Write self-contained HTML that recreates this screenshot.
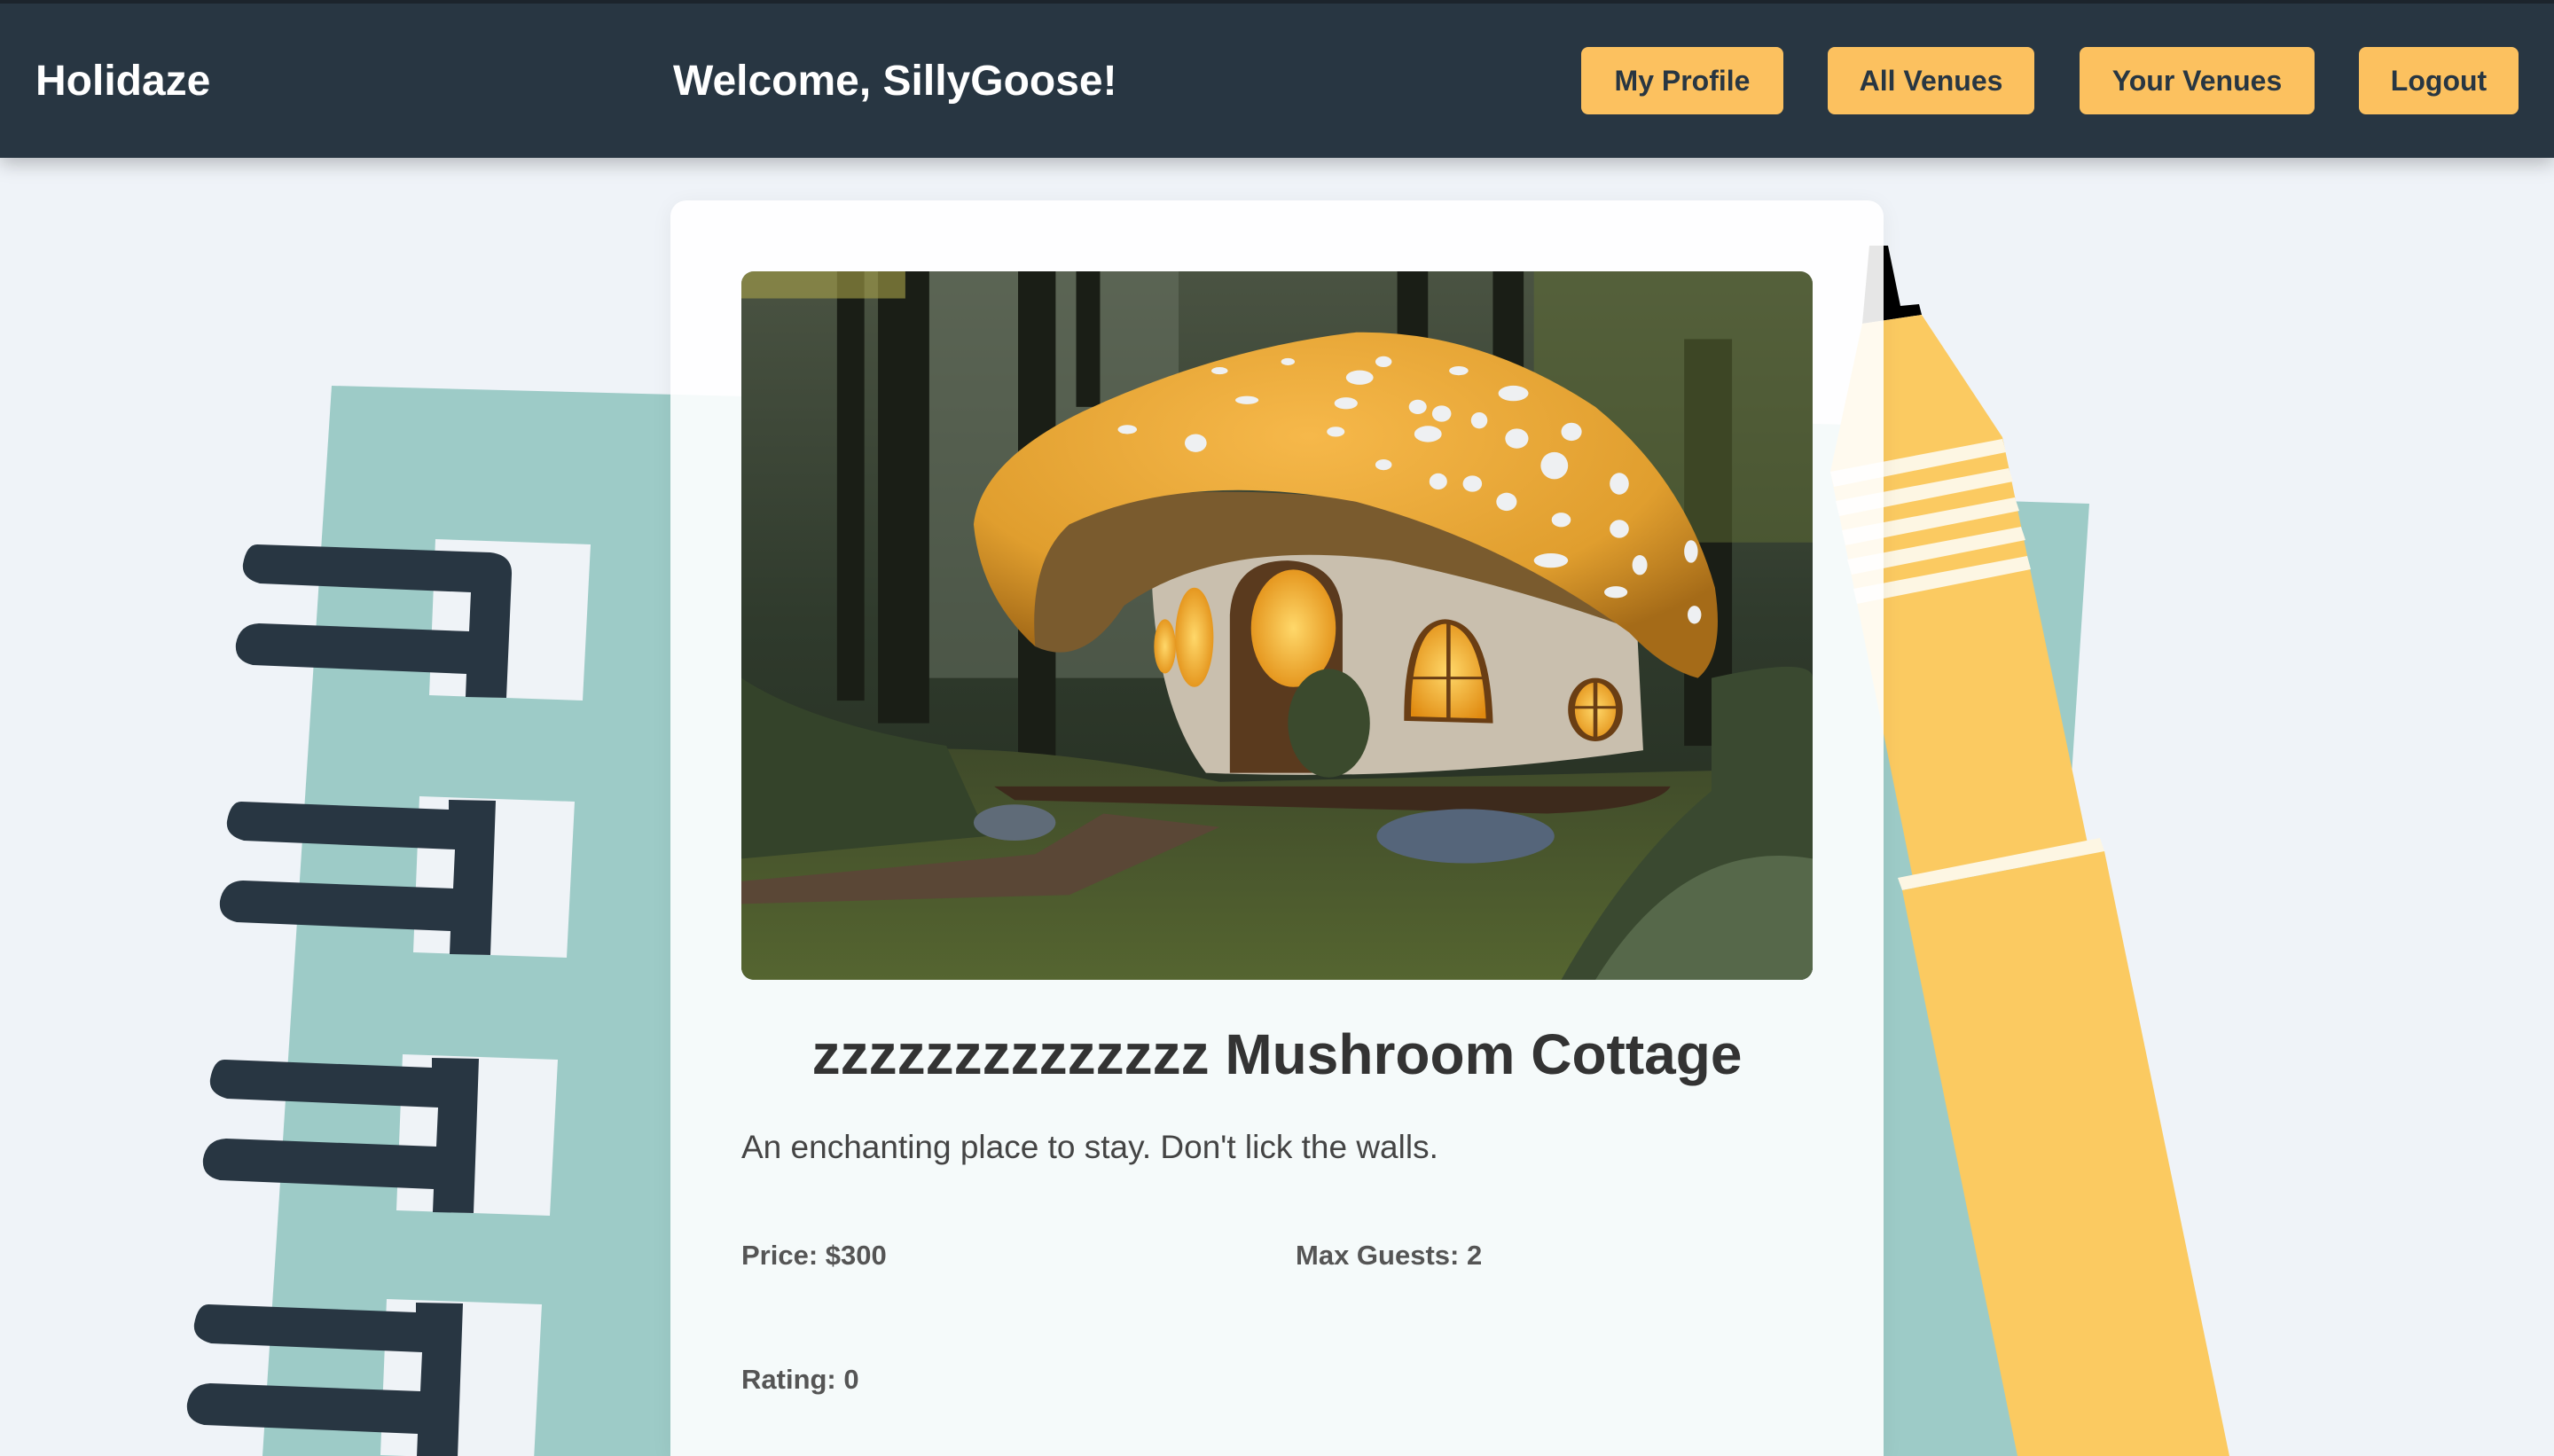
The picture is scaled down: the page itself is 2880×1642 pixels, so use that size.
<!DOCTYPE html>
<html><head><meta charset="utf-8">
<style>
*{margin:0;padding:0;box-sizing:border-box}
html,body{width:2880px;height:1642px;overflow:hidden;background:#eff3f8;font-family:"Liberation Sans",Arial,sans-serif}
#bg{position:absolute;left:0;top:0}
header{position:absolute;left:0;top:0;width:2880px;height:178px;background:#283642;border-top:4px solid #1c242c;box-shadow:0 6px 20px rgba(0,0,0,.25);z-index:5}
.logo{position:absolute;left:40px;top:60px;font-size:48px;font-weight:bold;color:#fff}
.welcome{position:absolute;left:759px;top:60px;font-size:48px;font-weight:bold;color:#fff}
.btn{position:absolute;top:49px;height:76px;background:#fcc15f;border-radius:8px;color:#283642;font-size:32px;font-weight:bold;display:flex;align-items:center;justify-content:center}
.card{position:absolute;left:756px;top:226px;width:1368px;height:1416px;background:rgba(255,255,255,.9);border-radius:18px 18px 0 0;box-shadow:0 4px 24px rgba(0,0,0,.06);z-index:3}
.img{position:absolute;left:80px;top:80px;width:1208px;height:799px;border-radius:14px;overflow:hidden}
h1{position:absolute;left:0;width:100%;text-align:center;top:926px;font-size:64px;font-weight:bold;color:#333}
.desc{position:absolute;left:80px;top:1047px;font-size:37px;color:#444}
.f{position:absolute;font-size:31px;font-weight:bold;color:#555}
</style></head><body>
<svg id="bg" width="2880" height="1642" viewBox="0 0 2880 1642">
  <polygon points="374,435 2124,480 2124,1642 296,1642" fill="#9dcbc7"/>
  <g fill="#eff3f7">
    <polygon points="491,608 666,614 657,790 484,784"/>
    <polygon points="473,898 648,904 639,1080 466,1074"/>
    <polygon points="454,1189 629,1195 620,1371 447,1365"/>
    <polygon points="436,1465 611,1471 602,1647 429,1641"/>
  </g>
  <g fill="#283642">
    <path d="M290,614 L553,623 Q578,626 577,648 L571,787 L525,786 L526,760 L285,750 Q264,745 266,726 Q270,704 292,703 L529,712 L531,668 L293,658 Q272,652 274,636 Q278,614 290,614 Z"/>
    <g transform="translate(-18,290)"><path d="M290,614 L524,623 L524,612 L577,613 L571,787 L525,786 L526,760 L285,750 Q264,745 266,726 Q270,704 292,703 L529,712 L531,668 L293,658 Q272,652 274,636 Q278,614 290,614 Z"/></g>
    <g transform="translate(-37,581)"><path d="M290,614 L524,623 L524,612 L577,613 L571,787 L525,786 L526,760 L285,750 Q264,745 266,726 Q270,704 292,703 L529,712 L531,668 L293,658 Q272,652 274,636 Q278,614 290,614 Z"/></g>
    <g transform="translate(-55,857)"><path d="M290,614 L524,623 L524,612 L577,613 L571,787 L525,786 L526,760 L285,750 Q264,745 266,726 Q270,704 292,703 L529,712 L531,668 L293,658 Q272,652 274,636 Q278,614 290,614 Z"/></g>
  </g>
  <polygon points="2100,560 2356,568 2286,1642 2100,1642" fill="#9dcbc7"/>
  <polygon points="2108,277 2129,277 2143,345 2164,343 2167,355 2100,365" fill="#000"/>
  <polygon points="2100,365 2167,355 2258,493 2354,951 2157,990 2064,532" fill="#fbca61"/>
  <g fill="#fdf6e3">
    <polygon points="2064,532 2258,495 2262,510 2068,549"/>
    <polygon points="2070,565 2265,528 2270,543 2074,582"/>
    <polygon points="2077,598 2272,561 2277,576 2081,615"/>
    <polygon points="2083,631 2279,594 2284,609 2088,648"/>
    <polygon points="2090,664 2286,627 2290,642 2094,681"/>
    <polygon points="2140,990 2368,945 2373,960 2145,1004"/>
  </g>
  <polygon points="2145,1004 2373,960 2514,1642 2275,1642" fill="#fbca61"/>
</svg>

<header>
  <div class="logo">Holidaze</div>
  <div class="welcome">Welcome, SillyGoose!</div>
  <div class="btn" style="left:1783px;width:228px">My Profile</div>
  <div class="btn" style="left:2061px;width:233px">All Venues</div>
  <div class="btn" style="left:2345px;width:265px">Your Venues</div>
  <div class="btn" style="left:2660px;width:180px">Logout</div>
</header>

<div class="card">
  <div class="img">
    <svg width="1208" height="799" viewBox="0 0 1568 1568" preserveAspectRatio="none">
      <defs>
        <linearGradient id="sky" x1="0" y1="0" x2="0" y2="1"><stop offset="0" stop-color="#4a5342"/><stop offset=".5" stop-color="#2f3a2c"/><stop offset="1" stop-color="#222b1e"/></linearGradient>
        <linearGradient id="gr" x1="0" y1="0" x2="0" y2="1"><stop offset="0" stop-color="#3f4a2a"/><stop offset="1" stop-color="#556530"/></linearGradient>
        <radialGradient id="cap" cx=".45" cy=".3" r=".7"><stop offset="0" stop-color="#f6b84a"/><stop offset=".7" stop-color="#e09e2e"/><stop offset="1" stop-color="#a56b18"/></radialGradient>
        <radialGradient id="win" cx=".5" cy=".5" r=".6"><stop offset="0" stop-color="#ffd86a"/><stop offset="1" stop-color="#e08a10"/></radialGradient>
      </defs>
      <rect width="1568" height="1568" fill="url(#sky)"/>
      <rect x="220" y="0" width="420" height="900" fill="#6c7566" opacity=".5"/>
      <g fill="#1a1e16">
        <rect x="200" y="0" width="75" height="1000"/>
        <rect x="140" y="0" width="40" height="950"/>
        <rect x="405" y="0" width="55" height="1120"/>
        <rect x="490" y="0" width="35" height="300"/>
        <rect x="960" y="0" width="45" height="160"/>
        <rect x="1100" y="0" width="45" height="230"/>
        <rect x="1380" y="150" width="70" height="900"/>
      </g>
      <rect x="1160" y="0" width="408" height="600" fill="#5f6e33" opacity=".5"/>
      <rect x="0" y="0" width="240" height="60" fill="#a9a24a" opacity=".6"/>
      <path d="M0,1100 Q300,1000 700,1130 L1568,1100 L1568,1568 L0,1568 Z" fill="url(#gr)"/>
      <path d="M0,900 Q100,1000 300,1050 L360,1250 L0,1300 Z" fill="#34432a"/>
      <path d="M1420,900 Q1568,850 1568,900 L1568,1568 L1200,1568 Q1300,1300 1420,1150 Z" fill="#3a4930"/>
      <path d="M600,620 Q980,560 1310,760 L1320,1060 Q1000,1130 680,1110 Q600,950 600,620 Z" fill="#c9bfae"/>
      <path d="M360,560 Q620,440 980,520 Q1250,640 1420,860 Q1200,720 950,640 Q700,590 560,740 Q500,880 430,830 Q380,720 360,560 Z" fill="#7a5b2e"/>
      <path d="M340,560 Q350,420 500,310 Q700,170 900,135 Q1080,130 1250,300 Q1380,460 1425,700 Q1440,850 1400,900 Q1350,880 1300,800 Q1120,600 900,510 Q650,440 480,560 Q420,640 430,830 Q350,720 340,560 Z" fill="url(#cap)"/>
      <g fill="#eef0f2">
        <ellipse cx="665" cy="380" rx="16" ry="20"/><ellipse cx="905" cy="235" rx="20" ry="16"/><ellipse cx="1130" cy="270" rx="22" ry="17"/>
        <ellipse cx="1190" cy="430" rx="20" ry="30"/><ellipse cx="1135" cy="370" rx="17" ry="22"/><ellipse cx="1005" cy="360" rx="20" ry="18"/>
        <ellipse cx="1020" cy="465" rx="13" ry="18"/><ellipse cx="1070" cy="470" rx="14" ry="18"/><ellipse cx="1120" cy="510" rx="15" ry="20"/>
        <ellipse cx="1285" cy="470" rx="14" ry="24"/><ellipse cx="1285" cy="570" rx="14" ry="20"/><ellipse cx="1185" cy="640" rx="25" ry="16"/>
        <ellipse cx="1280" cy="710" rx="17" ry="13"/><ellipse cx="1315" cy="650" rx="11" ry="22"/><ellipse cx="1200" cy="550" rx="14" ry="16"/>
        <ellipse cx="885" cy="292" rx="17" ry="13"/><ellipse cx="940" cy="428" rx="12" ry="12"/><ellipse cx="870" cy="355" rx="13" ry="11"/>
        <ellipse cx="565" cy="350" rx="14" ry="10"/><ellipse cx="740" cy="285" rx="17" ry="9"/><ellipse cx="1025" cy="315" rx="14" ry="18"/>
        <ellipse cx="1080" cy="330" rx="12" ry="18"/><ellipse cx="990" cy="300" rx="13" ry="16"/><ellipse cx="1215" cy="355" rx="15" ry="20"/>
        <ellipse cx="940" cy="200" rx="12" ry="12"/><ellipse cx="1390" cy="620" rx="10" ry="25"/><ellipse cx="1395" cy="760" rx="10" ry="20"/>
        <ellipse cx="700" cy="220" rx="12" ry="8"/><ellipse cx="800" cy="200" rx="10" ry="8"/><ellipse cx="1050" cy="220" rx="14" ry="10"/>
      </g>
      <path d="M715,1110 L715,760 Q720,640 800,640 Q875,645 880,760 L880,1110 Z" fill="#5a3a1e"/>
      <ellipse cx="808" cy="790" rx="62" ry="130" fill="url(#win)"/>
      <ellipse cx="663" cy="810" rx="28" ry="110" fill="url(#win)"/>
      <ellipse cx="620" cy="830" rx="16" ry="60" fill="url(#win)"/>
      <path d="M975,990 Q975,780 1030,775 Q1090,780 1095,995 Z" fill="url(#win)" stroke="#6a3e14" stroke-width="10"/>
      <ellipse cx="1250" cy="970" rx="35" ry="65" fill="url(#win)" stroke="#6a3e14" stroke-width="10"/>
      <g stroke="#6a3e14" stroke-width="6"><line x1="1035" y1="780" x2="1035" y2="990"/><line x1="978" y1="900" x2="1092" y2="900"/><line x1="1250" y1="905" x2="1250" y2="1035"/><line x1="1215" y1="965" x2="1285" y2="965"/></g>
      <path d="M370,1140 L1360,1140 Q1340,1190 1180,1200 L400,1170 Z" fill="#3d2a1c"/>
      <path d="M0,1350 L430,1290 L530,1200 L700,1230 L480,1380 L0,1400 Z" fill="#5a4736"/>
      <ellipse cx="1060" cy="1250" rx="130" ry="60" fill="#55657a"/>
      <ellipse cx="400" cy="1220" rx="60" ry="40" fill="#5f6b78"/>
      <ellipse cx="860" cy="1000" rx="60" ry="120" fill="#3b4a2d"/>
      <path d="M1250,1568 Q1380,1250 1568,1300 L1568,1568 Z" fill="#56684a"/>
    </svg>
  </div>
  <h1>zzzzzzzzzzzzzz Mushroom Cottage</h1>
  <div class="desc">An enchanting place to stay. Don't lick the walls.</div>
  <div class="f" style="left:80px;top:1172px">Price: $300</div>
  <div class="f" style="left:705px;top:1172px">Max Guests: 2</div>
  <div class="f" style="left:80px;top:1312px">Rating: 0</div>
</div>
</body></html>
